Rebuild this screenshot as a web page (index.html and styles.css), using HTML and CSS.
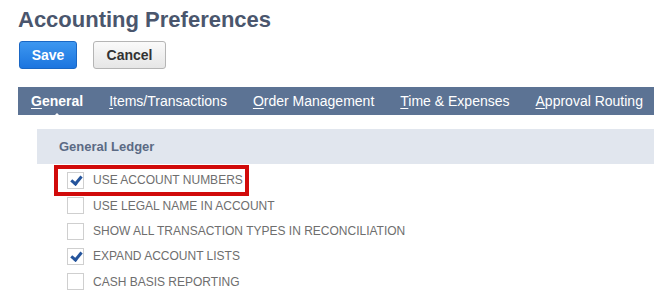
FILE: index.html
```html
<!DOCTYPE html>
<html lang="en">
<head>
    <meta charset="UTF-8">
    <link rel="stylesheet" href="styles.css">
    <title>Accounting Preferences</title>
</head>
<body>
    <div class="page">
        <h1 class="title">Accounting Preferences</h1>
        <div class="actions">
            <button class="btn btn-save">Save</button>
            <button class="btn btn-cancel">Cancel</button>
        </div>

        <div class="tabs">
            <a href="#" class="tab active"><u>G</u>eneral</a>
            <a href="#" class="tab"><u>I</u>tems/Transactions</a>
            <a href="#" class="tab"><u>O</u>rder Management</a>
            <a href="#" class="tab"><u>T</u>ime &amp; Expenses</a>
            <a href="#" class="tab"><u>A</u>pproval Routing</a>
        </div>

        <div class="section">
            <div class="section-head">General Ledger</div>
            <ul class="options">
                <li class="option highlight"><span class="box checked"></span>Use Account Numbers</li>
                <li class="option"><span class="box"></span>Use Legal Name in Account</li>
                <li class="option"><span class="box"></span>Show All Transaction Types in Reconciliation</li>
                <li class="option"><span class="box checked"></span>Expand Account Lists</li>
                <li class="option"><span class="box"></span>Cash Basis Reporting</li>
            </ul>
        </div>
    </div>
</body>
</html>
```

FILE: styles.css
```css
body {
    margin: 0;
    background: #fff;
    font-family: "Liberation Sans", Arial, sans-serif;
    overflow: hidden;
}

.page {
    padding: 6px 0 0 18px;
}

.title {
    margin: 0;
    font-size: 22px;
    font-weight: bold;
    color: #4a566d;
    line-height: 28px;
}

.actions {
    display: flex;
    gap: 16px;
    margin: 7px 0 0 1px;
}

.btn {
    height: 28px;
    border-radius: 3px;
    font-family: "Liberation Sans", Arial, sans-serif;
    font-size: 14px;
    font-weight: bold;
    padding: 0;
    cursor: pointer;
}

.btn-save {
    width: 58px;
    color: #fff;
    background: linear-gradient(#3d97f0, #1c75df);
    border: 1px solid #1a67c4;
}

.btn-cancel {
    width: 73px;
    color: #333;
    background: linear-gradient(#fafafa, #e6e6e6);
    border: 1px solid #b5b5b5;
}

.tabs {
    display: flex;
    align-items: center;
    height: 28px;
    margin-top: 18px;
    padding-left: 13px;
    gap: 26px;
    background: #5c7394;
}

.tab {
    position: relative;
    color: #fff;
    text-decoration: none;
    font-size: 14px;
    white-space: nowrap;
}

.tab u {
    text-underline-offset: 2px;
}

.tab.active {
    font-weight: bold;
}

/* little caret under the current tab */
.tab.active::after {
    content: "";
    position: absolute;
    left: 50%;
    bottom: -10px;
    margin-left: -6px;
    border: 6px solid transparent;
    border-bottom-color: #fff;
    border-top: 0;
}

.section {
    margin: 14px 0 0 19px;
}

.section-head {
    height: 35px;
    line-height: 35px;
    padding-left: 22px;
    background: #e1e6ee;
    color: #5b6a84;
    font-size: 13px;
    font-weight: bold;
}

.options {
    list-style: none;
    margin: 3px 0 0 0;
    padding: 0;
}

.option {
    display: flex;
    align-items: center;
    height: 25.4px;
    padding-left: 30px;
    font-size: 12px;
    text-transform: uppercase;
    color: #6e6e6e;
    white-space: nowrap;
}

.option:first-child {
    height: 26px;
}

.option.highlight {
    position: relative;
}

.option.highlight::after {
    content: "";
    position: absolute;
    left: 17px;
    top: -2px;
    width: 187px;
    height: 23px;
    border: 4px solid #d10a0a;
}

.box {
    position: relative;
    width: 15px;
    height: 15px;
    border: 1px solid #cfcfcf;
    background: #fff;
    margin-right: 9px;
    flex-shrink: 0;
}

.box.checked::before {
    content: "";
    position: absolute;
    left: 5px;
    top: 1px;
    width: 4px;
    height: 8px;
    border: solid #24549c;
    border-width: 0 3px 3px 0;
    transform: rotate(40deg);
}
```
